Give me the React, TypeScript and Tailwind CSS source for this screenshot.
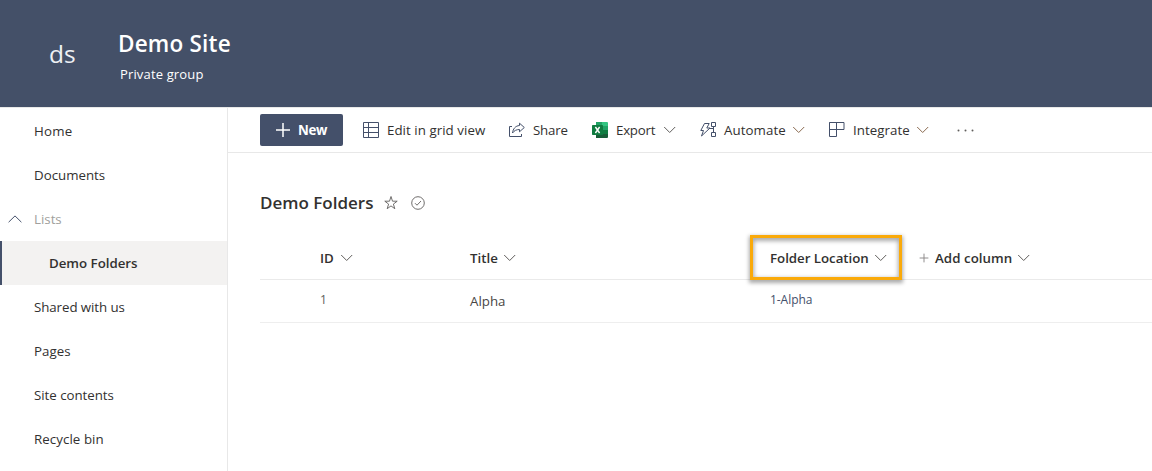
import type { ReactNode } from "react";

function Chevron({ className = "", up = false }: { className?: string; up?: boolean }) {
  return (
    <svg viewBox="0 0 14 8" className={`h-[8px] w-[14px] shrink-0 ${className}`} fill="none" stroke="currentColor" strokeWidth="1">
      <path d={up ? "M.6 7.2 7 .9l6.4 6.3" : "M1.2 1 6.7 6.5 12.2 1"} />
    </svg>
  );
}

function PlusIcon({ className }: { className: string }) {
  return (
    <svg viewBox="0 0 16 16" className={className} fill="none" stroke="currentColor">
      <path d="M8 1v14M1 8h14" />
    </svg>
  );
}

function GridIcon() {
  return (
    <svg viewBox="0 0 17 16" className="h-4 w-[17px]" fill="none" stroke="#44506a">
      <path d="M.5.5h15v15H.5zM5.5.5v15M.5 5.5h15M.5 10.5h15" />
    </svg>
  );
}

function ShareIcon() {
  return (
    <svg viewBox="0 0 16 16" className="size-4" fill="none" stroke="#44506a" strokeWidth="1">
      <path d="M3 4.5H.5v10h12V12" />
      <path d="M10.500 1.200 15.300 5.500 10.500 9.800V7.500C7.500 7.500 5.200 8.600 3.500 11 4 6.800 6.500 3.800 10.500 3.500Z" />
    </svg>
  );
}

function ExcelIcon() {
  return (
    <svg viewBox="0 0 16 16" className="size-4">
      <path fill="#21a366" d="M4 0h6v4H4z" />
      <path fill="#33c481" d="M10 0h5q1 0 1 1v3h-6z" />
      <path fill="#107c41" d="M4 4h6v4H4zM10 8h6v4h-6z" />
      <path fill="#21a366" d="M10 4h6v4h-6z" />
      <path fill="#185c37" d="M4 8h6v4h6v3q0 1-1 1H4z" />
      <rect y="3" width="11" height="10" rx=".7" fill="#107c41" />
      <path d="m3.400 5 4.200 6m0-6-4.200 6" stroke="#fff" strokeWidth="1.400" />
    </svg>
  );
}

function AutomateIcon() {
  return (
    <svg viewBox="0 0 17 16" className="h-4 w-[17px]" fill="none" stroke="#44506a">
      <path d="M4.500 1.500h4.700L6.800 6H10L1.500 14l2-5.500H.8z" />
      <path d="M11.500.5h4v4h-4zM11.500 10.500h4v4h-4zM13.500 4.500v6M9 6.500h4.500" />
    </svg>
  );
}

function IntegrateIcon() {
  return (
    <svg viewBox="0 0 16 16" className="size-4" fill="none" stroke="#44506a">
      <path d="M.5.5h14.500v7H.5zM7.500.5v14H.5V.5" />
    </svg>
  );
}

function Command({ icon, children, tracking, menu, className = "" }: { icon: ReactNode; children: string; tracking: string; menu?: string; className?: string }) {
  return (
    <div className={`flex items-center ${className}`}>
      {icon}
      <span className={tracking}>{children}</span>
      {menu && <Chevron className={`ml-auto ${menu}`} />}
    </div>
  );
}

function NavItem({ children, tracking }: { children: string; tracking: string }) {
  return <a className={`flex h-11 items-center pl-[34px] ${tracking}`}>{children}</a>;
}

export default function App() {
  return (
    <div className="flex h-[471px] w-[1152px] flex-col overflow-hidden bg-white font-['Open_Sans','Noto_Sans',sans-serif] text-[13.3px] leading-5 whitespace-nowrap text-[#323130]">
      <header className="flex h-[107px] shrink-0 bg-[#445068] text-white">
        <div className="w-[118px] pt-[38px] pl-[49px] text-[24.5px] leading-8 font-normal text-[#eef0f4]">ds</div>
        <div className="pt-[29px]">
          <h1 className="text-[22.500px] leading-[30px] font-semibold tracking-[0.2px]">Demo Site</h1>
          <p className="pt-[5px] pl-[2px] text-[13px] tracking-[0.15px]">Private group</p>
        </div>
      </header>
      <div className="flex min-h-0 flex-1">
        <nav className="w-[228px] shrink-0 border-t border-r border-[#e8e8e8] pt-px">
          <NavItem tracking="tracking-[0.2px]">Home</NavItem>
          <NavItem tracking="tracking-normal">Documents</NavItem>
          <a className="flex h-11 items-center pl-2 text-[#a19f9d]">
            <Chevron up className="text-[#44506a]" />
            <span className="ml-3">Lists</span>
          </a>
          <a className="flex h-11 items-center border-l-2 border-[#44506a] bg-[#f3f2f1] pl-[47px] font-semibold tracking-[-0.02px]">Demo Folders</a>
          <NavItem tracking="tracking-[-0.07px]">Shared with us</NavItem>
          <NavItem tracking="tracking-[0.07px]">Pages</NavItem>
          <NavItem tracking="tracking-[-0.03px]">Site contents</NavItem>
          <NavItem tracking="tracking-[0.07px]">Recycle bin</NavItem>
        </nav>
        <main className="min-w-0 flex-1">
          <div className="flex h-[46px] items-center border-t border-b border-[#e8e8e8] pl-8">
            <button className="flex h-8 w-[83px] items-center rounded-[2px] bg-[#44506a] pl-[15px] font-bold text-white">
              <PlusIcon className="size-4 stroke-[1.500]" />
              <span className="ml-[7px] tracking-[-0.3px]">New</span>
            </button>
            <Command icon={<GridIcon />} tracking="ml-[7px] tracking-[0.05px]" className="ml-5 w-[146px]">Edit in grid view</Command>
            <Command icon={<ShareIcon />} tracking="ml-2 tracking-[-0.2px]" className="w-[83px]">Share</Command>
            <Command icon={<ExcelIcon />} tracking="ml-2 tracking-[-0.25px]" menu="text-[#605e5c]" className="w-[85px]">Export</Command>
            <Command icon={<AutomateIcon />} tracking="ml-[7px] tracking-[0.08px]" menu="text-[#8a6a50]" className="ml-[23px] w-[106px]">Automate</Command>
            <Command icon={<IntegrateIcon />} tracking="ml-2 tracking-[0.05px]" menu="text-[#8a6a50]" className="ml-[23px] w-[101px]">Integrate</Command>
            <svg viewBox="0 0 17 3" className="ml-[27px] h-[3px] w-[17px]" fill="#605e5c">
              <circle cx="1.500" cy="1.500" r="1" />
              <circle cx="8.500" cy="1.500" r="1" />
              <circle cx="15.500" cy="1.500" r="1" />
            </svg>
          </div>
          <div className="flex h-[84px] items-center pt-4 pl-8">
            <h2 className="text-[17px] leading-6 font-semibold">Demo Folders</h2>
            <svg viewBox="0 0 16 16" className="ml-[10px] size-4" fill="none" stroke="#605e5c">
              <path d="m8 1.500 1.500 4.700h4.700l-3.800 2.900 1.400 4.600L8 10.900l-3.800 2.800 1.400-4.600-3.800-2.900h4.700z" strokeWidth=".9" />
            </svg>
            <svg viewBox="0 0 14 14" className="ml-[12px] size-[14px]" fill="none" stroke="#605e5c">
              <circle cx="7" cy="7" r="6.300" strokeWidth=".9" />
              <path d="m4 7.200 2 2 4-4.200" strokeWidth=".9" />
            </svg>
          </div>
          <div className="ml-8">
            <div className="relative flex h-[43px] items-center border-b border-[#eaeaea] font-semibold">
              <div className="flex w-[210px] items-center gap-[6px] pl-[60px]">ID<Chevron className="text-[#605e5c]" /></div>
              <div className="flex w-[300px] items-center gap-[5px]">Title<Chevron className="text-[#605e5c]" /></div>
              <div className="flex w-[149px] items-center gap-[5px]"><span className="tracking-[-0.03px]">Folder Location</span><Chevron className="text-[#605e5c]" /></div>
              <div className="flex items-center"><PlusIcon className="size-[10px] stroke-[1.500] text-[#8a8886]" /><span className="ml-[6px] tracking-[0.05px]">Add column</span><Chevron className="ml-[5px] text-[#605e5c]" /></div>
              <div className="absolute top-[-2px] left-[490px] h-[45px] w-[152px] border-[3px] border-[#faaa0a] shadow-[0_2px_4px_1px_#0005,inset_0_2px_4px_1px_#0005]" />
            </div>
            <div className="flex h-[43px] items-center border-b border-[#eeeeee] text-[#605e5c]">
              <div className="w-[210px] pb-[3px] pl-[60px] text-xs">1</div>
              <div className="w-[300px] text-[#484644]">Alpha</div>
              <div className="pb-[3px] text-xs tracking-[-0.05px] text-[#44506a]">1-Alpha</div>
            </div>
          </div>
        </main>
      </div>
    </div>
  );
}
